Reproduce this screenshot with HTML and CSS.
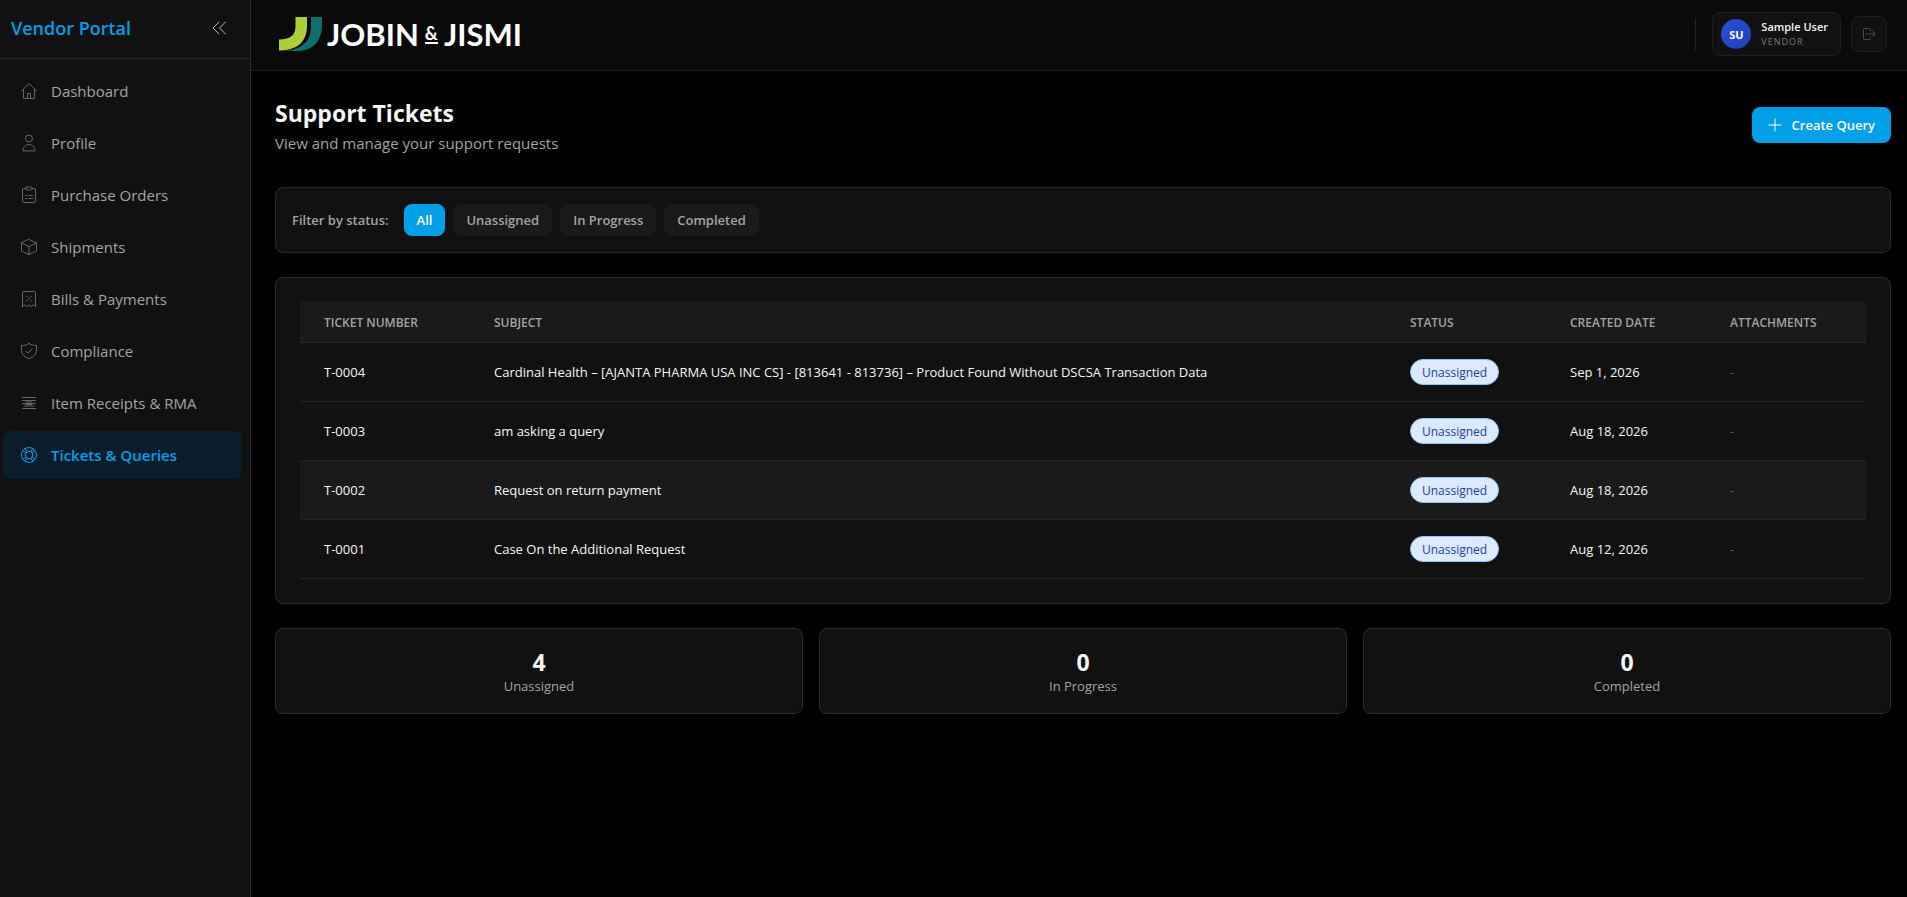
FILE: index.html
```html
<!DOCTYPE html>
<html lang="en">

<head>
    <meta charset="UTF-8">
    <meta name="viewport" content="width=device-width, initial-scale=1.0">
    <title>Support Tickets - Vendor Portal</title>
    <link rel="stylesheet" href="styles.css">
</head>

<body>

    <!-- Sidebar -->
    <aside class="sidebar">
        <div class="sidebar-header">
            <span class="portal-name">Vendor Portal</span>
            <button class="collapse-btn" type="button" aria-label="Collapse sidebar">
                <svg width="16" height="16" viewBox="0 0 16 16"><path d="M8 2 2 8l6 6M14.5 2l-6 6 6 6"/></svg>
            </button>
        </div>
        <nav class="nav">
            <a class="nav-item" href="#">
                <svg class="icon" viewBox="0 0 18 18"><path d="M1.5 9 9 1.5 16.5 9M3.500 7.5v9h11v-9M7.5 16.5v-5h3v5"/></svg>
                Dashboard
            </a>
            <a class="nav-item" href="#">
                <svg class="icon" viewBox="0 0 18 18"><circle cx="9" cy="4.5" r="3.5"/><path d="M3 16.500c0-3.500 2.500-6 6-6s6 2.500 6 6z"/></svg>
                Profile
            </a>
            <a class="nav-item" href="#">
                <svg class="icon" viewBox="0 0 18 18"><path d="M6 2.500H4Q2.500 2.500 2.500 4v11q0 1.500 1.500 1.500h10q1.500 0 1.500-1.500V4q0-1.500-1.500-1.500h-2"/><rect x="6" y="1" width="6" height="3" rx="1"/><path d="M5.500 9.500h1.500M9 9.500h3.500M5.500 12.500h1.500M9 12.500h3.500"/></svg>
                Purchase Orders
            </a>
            <a class="nav-item" href="#">
                <svg class="icon" viewBox="0 0 18 18"><path d="M9 1.500 16.500 5v8L9 16.500 1.500 13V5zM1.500 5 9 8.500 16.500 5M9 8.500v8"/></svg>
                Shipments
            </a>
            <a class="nav-item" href="#">
                <svg class="icon" viewBox="0 0 18 18"><path d="M2.500 16.500V3q0-1.500 1.500-1.500h10q1.500 0 1.500 1.500v13.500l-2.200-1.500-2.100 1.500L9 15l-2.200 1.500L4.700 15zM6.500 11l5-5"/><path d="M6.500 6.200h.8M10.800 10.800h.8"/></svg>
                Bills &amp; Payments
            </a>
            <a class="nav-item" href="#">
                <svg class="icon" viewBox="0 0 18 18"><path d="M9 1.500c2.200 1.400 4.500 2 7.500 2v4.500c0 4.500-3 7-7.500 8.500-4.500-1.500-7.500-4-7.500-8.500V3.500c3 0 5.300-.6 7.500-2zM6 9l2 2 4-4"/></svg>
                Compliance
            </a>
            <a class="nav-item" href="#">
                <svg class="icon" viewBox="0 0 18 18"><path d="M2.500 3.500h13M2.500 6.500h13M2.500 9.500h13M2.500 14.500h13M6 8h6M6 10.500h6M4 12h10"/></svg>
                Item Receipts &amp; RMA
            </a>
            <a class="nav-item active" href="#" aria-current="page">
                <svg class="icon" viewBox="0 0 18 18"><circle cx="9" cy="9" r="7.500"/><circle cx="9" cy="9" r="3.700"/><path d="M3 4.500 6.300 7M5 2.700 7.500 5.600M15 4.500 11.700 7M13 2.700l-2.500 2.900M3 13.500 6.300 11M5 15.300l2.500-2.900M15 13.500 11.700 11M13 15.300l-2.500-2.900"/></svg>
                Tickets &amp; Queries
            </a>
        </nav>
    </aside>

    <div class="page">
        <!-- Top bar -->
        <header class="topbar">
            <a class="logo" href="#">
                <svg width="43" height="34" viewBox="0 0 43 34">
                    <path fill="#0f6e70" d="M32 0h11v8c0 16-9 26-25 26H5c15-1 23-8 25-14 1.500-3 2-7 2-12z"/>
                    <path fill="#abd037" d="M16.500 0H28v9c0 15-9 24.500-28 24.500v-11c12 0 16.500-5 16.500-13z"/>
                </svg>
                <span class="logo-text">JOBIN <span class="logo-amp">&amp;</span> JISMI</span>
            </a>
            <div class="user-area">
                <span class="divider"></span>
                <div class="user-card">
                    <span class="avatar">SU</span>
                    <div class="user-info">
                        <span class="user-name">Sample User</span>
                        <span class="user-role">VENDOR</span>
                    </div>
                </div>
                <button class="logout-btn" type="button" aria-label="Log out">
                    <svg width="14" height="14" viewBox="0 0 14 14"><path d="M8.500 4V2.500Q8.500 1.500 7.500 1.500h-5Q1.500 1.500 1.500 2.500v9q0 1 1 1h5q1 0 1-1V10M4.500 7H13M10.500 4.500 13 7l-2.500 2.500"/></svg>
                </button>
            </div>
        </header>

        <main class="content">
            <div class="page-header">
                <div>
                    <h1>Support Tickets</h1>
                    <p>View and manage your support requests</p>
                </div>
                <button class="create-btn" type="button">
                    <svg width="14" height="14" viewBox="0 0 14 14"><path d="M7 1v12M1 7h12"/></svg>
                    Create Query
                </button>
            </div>

            <!-- Filters -->
            <div class="card filters">
                <span class="filter-label">Filter by status:</span>
                <button class="filter-btn selected" type="button">All</button>
                <button class="filter-btn" type="button">Unassigned</button>
                <button class="filter-btn" type="button">In Progress</button>
                <button class="filter-btn" type="button">Completed</button>
            </div>

            <!-- Tickets -->
            <div class="card table-card">
                <table>
                    <thead>
                        <tr>
                            <th class="col-number">Ticket Number</th>
                            <th>Subject</th>
                            <th class="col-small">Status</th>
                            <th class="col-small">Created Date</th>
                            <th class="col-small">Attachments</th>
                        </tr>
                    </thead>
                    <tbody>
                        <tr>
                            <td>T-0004</td>
                            <td>Cardinal Health – [AJANTA PHARMA USA INC CS] - [813641 - 813736] – Product Found Without DSCSA Transaction Data</td>
                            <td><span class="badge">Unassigned</span></td>
                            <td>Sep 1, 2026</td>
                            <td class="empty">-</td>
                        </tr>
                        <tr>
                            <td>T-0003</td>
                            <td>am asking a query</td>
                            <td><span class="badge">Unassigned</span></td>
                            <td>Aug 18, 2026</td>
                            <td class="empty">-</td>
                        </tr>
                        <tr class="highlight">
                            <td>T-0002</td>
                            <td>Request on return payment</td>
                            <td><span class="badge">Unassigned</span></td>
                            <td>Aug 18, 2026</td>
                            <td class="empty">-</td>
                        </tr>
                        <tr>
                            <td>T-0001</td>
                            <td>Case On the Additional Request</td>
                            <td><span class="badge">Unassigned</span></td>
                            <td>Aug 12, 2026</td>
                            <td class="empty">-</td>
                        </tr>
                    </tbody>
                </table>
            </div>

            <!-- Totals -->
            <div class="stats">
                <div class="card stat">
                    <span class="stat-value">4</span>
                    <span class="stat-label">Unassigned</span>
                </div>
                <div class="card stat">
                    <span class="stat-value">0</span>
                    <span class="stat-label">In Progress</span>
                </div>
                <div class="card stat">
                    <span class="stat-value">0</span>
                    <span class="stat-label">Completed</span>
                </div>
            </div>
        </main>
    </div>

</body>

</html>
```

FILE: styles.css
```css
* {
    box-sizing: border-box;
}

body {
    margin: 0;
    min-height: 100vh;
    display: flex;
    background-color: #000;
    color: #f5f5f5;
    font-family: "Open Sans", "Noto Sans", sans-serif;
    font-size: 14px;
}

button {
    font-family: inherit;
    border: none;
    cursor: pointer;
}

a {
    text-decoration: none;
}

svg {
    flex-shrink: 0;
    fill: none;
    stroke: currentColor;
    stroke-linecap: round;
    stroke-linejoin: round;
}

/* Sidebar */
.sidebar {
    width: 251px;
    flex-shrink: 0;
    background-color: #111;
    border-right: 1px solid #2a2a2a;
}

.sidebar-header {
    height: 59px;
    padding: 0 17px 2px 11px;
    display: flex;
    align-items: center;
    justify-content: space-between;
    border-bottom: 1px solid #2a2a2a;
}

.portal-name {
    color: #009fe8;
    font-size: 18px;
    font-weight: 600;
}

.collapse-btn {
    display: flex;
    padding: 6px;
    background: none;
    color: #b8b8b8;
}

.nav {
    display: flex;
    flex-direction: column;
    gap: 4px;
    padding: 8px 8px 8px 3px;
}

.nav-item {
    height: 48px;
    padding: 0 17px;
    display: flex;
    align-items: center;
    gap: 13px;
    border-radius: 8px;
    color: #a3a3a3;
    font-size: 15px;
}

.nav-item .icon {
    width: 18px;
    height: 18px;
    color: #666;
}

.nav-item.active {
    background-color: #0a1d2b;
    color: #009fe8;
    font-weight: 600;
}

.nav-item.active .icon {
    color: #009fe8;
}

/* Top bar */
.page {
    flex: 1;
    min-width: 0;
}

.topbar {
    height: 71px;
    padding: 0 20px 2px 28px;
    display: flex;
    align-items: center;
    justify-content: space-between;
    background-color: #0a0a0a;
    border-bottom: 1px solid #1f1f1f;
}

.logo {
    display: flex;
    align-items: center;
    gap: 5px;
    color: #fff;
}

.logo svg {
    stroke: none;
}

.logo-text {
    display: flex;
    align-items: center;
    gap: 6px;
    font-family: Lato, sans-serif;
    font-size: 31px;
    font-weight: 700;
    line-height: 34px;
}

.logo-amp {
    border-bottom: 2px solid #fff;
    font-size: 18px;
    line-height: 18px;
}

.user-area {
    display: flex;
    align-items: center;
    gap: 10px;
}

.divider {
    width: 1px;
    height: 32px;
    margin-right: 6px;
    background-color: #242424;
}

.user-card {
    height: 44px;
    padding: 0 12px 0 8px;
    display: flex;
    align-items: center;
    gap: 10px;
    background-color: #111;
    border: 1px solid #1f1f1f;
    border-radius: 8px;
}

.avatar {
    width: 30px;
    height: 30px;
    display: flex;
    align-items: center;
    justify-content: center;
    border-radius: 50%;
    background: linear-gradient(135deg, #2a50dc, #1e3fb5);
    color: #fff;
    font-size: 11px;
    font-weight: 700;
}

.user-info {
    display: flex;
    flex-direction: column;
}

.user-name {
    font-size: 11px;
    font-weight: 600;
    line-height: 16px;
}

.user-role {
    color: #7a7a7a;
    font-size: 9px;
    letter-spacing: 1px;
    line-height: 14px;
}

.logout-btn {
    width: 36px;
    height: 36px;
    display: flex;
    align-items: center;
    justify-content: center;
    background-color: #111;
    border: 1px solid #1f1f1f;
    border-radius: 8px;
    color: #4a4a4a;
}

/* Content */
.content {
    display: flex;
    flex-direction: column;
    gap: 24px;
    padding: 24px 16px 24px 24px;
}

.page-header {
    padding-bottom: 8px;
    display: flex;
    align-items: center;
    justify-content: space-between;
}

.page-header h1 {
    margin: 0;
    font-size: 23px;
    font-weight: 700;
    line-height: 36px;
}

.page-header p {
    margin: 0;
    color: #a3a3a3;
    font-size: 15px;
    line-height: 24px;
}

.create-btn {
    height: 36px;
    padding: 0 16px;
    display: flex;
    align-items: center;
    gap: 10px;
    background-color: #009fe8;
    border-radius: 8px;
    color: #fff;
    font-size: 13px;
    font-weight: 600;
}

.card {
    background-color: #111;
    border: 1px solid #2a2a2a;
    border-radius: 8px;
}

.filters {
    padding: 16px;
    display: flex;
    align-items: center;
    gap: 8px;
}

.filter-label {
    margin-right: 7px;
    color: #a3a3a3;
    font-size: 13px;
    font-weight: 600;
}

.filter-btn {
    height: 32px;
    padding: 0 13px;
    background-color: #1a1a1a;
    border-radius: 8px;
    color: #a3a3a3;
    font-size: 13px;
    font-weight: 600;
}

.filter-btn.selected {
    background-color: #009fe8;
    color: #fff;
}

/* Table */
.table-card {
    padding: 24px;
}

table {
    width: 100%;
    border-collapse: separate;
    border-spacing: 0;
    table-layout: fixed;
}

th {
    height: 41px;
    padding: 0 24px;
    background-color: #1a1a1a;
    border-bottom: 1px solid #2a2a2a;
    color: #a3a3a3;
    font-size: 12px;
    font-weight: 600;
    text-align: left;
    text-transform: uppercase;
}

.col-number {
    width: 170px;
}

.col-small {
    width: 160px;
}

td {
    height: 59px;
    padding: 0 24px;
    border-bottom: 1px solid #242424;
    font-size: 13px;
}

.highlight td {
    background-color: #1a1a1a;
}

.empty {
    color: #5c5c5c;
}

.badge {
    display: inline-block;
    padding: 1px 11px 0;
    background-color: #dbeafe;
    border: 1px solid #93c5fd;
    border-radius: 13px;
    color: #1e40af;
    font-size: 12px;
    line-height: 23px;
}

/* Totals */
.stats {
    display: grid;
    grid-template-columns: repeat(3, 1fr);
    gap: 16px;
}

.stat {
    height: 86px;
    padding-top: 2px;
    display: flex;
    flex-direction: column;
    align-items: center;
    justify-content: center;
}

.stat-value {
    font-size: 23px;
    font-weight: 700;
    line-height: 28px;
}

.stat-label {
    color: #a3a3a3;
    font-size: 13px;
    line-height: 20px;
}
```
